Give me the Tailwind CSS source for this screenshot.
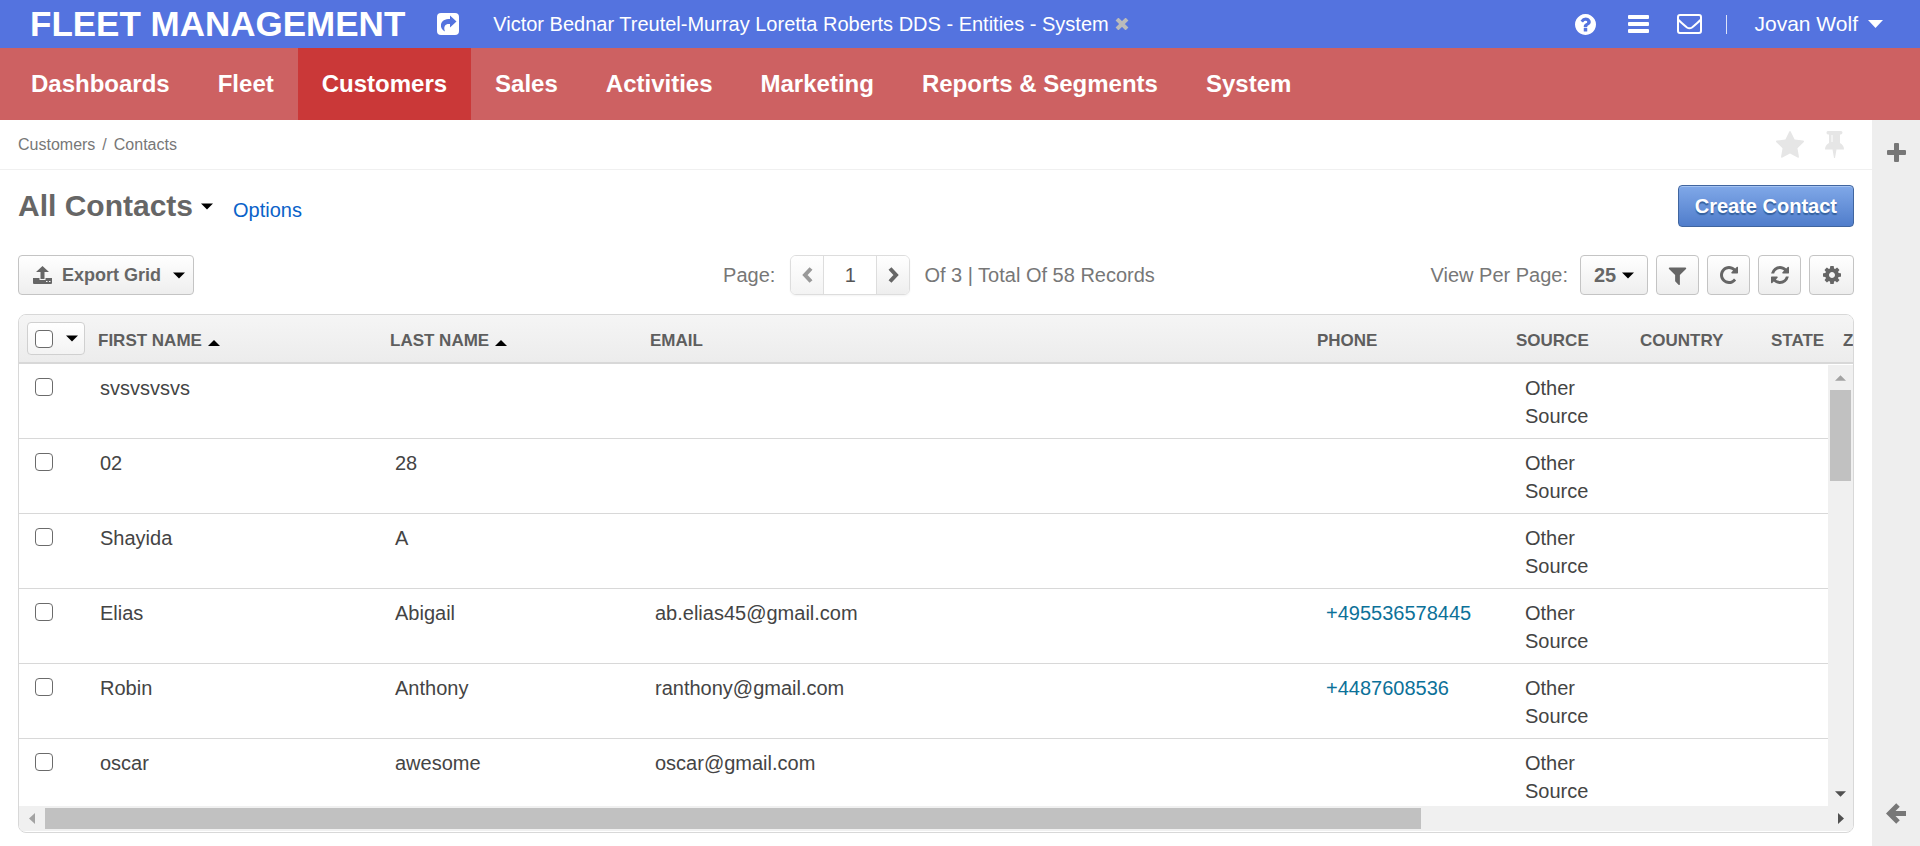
<!DOCTYPE html>
<html lang="en">
<head>
<meta charset="utf-8">
<meta name="viewport" content="width=device-width, initial-scale=1">
<title>All Contacts - Customers</title>
<script src="https://cdn.jsdelivr.net/npm/@tailwindcss/browser@4"></script>
</head>
<body class="flex h-screen flex-col overflow-hidden bg-white font-['Liberation_Sans',Arial,sans-serif] text-[20px] text-[#444]">

<svg class="hidden" aria-hidden="true">
  <symbol id="caret" viewBox="0 0 12 6"><path d="M0 0h12L6 6z"/></symbol>
  <symbol id="question" viewBox="128 128 1536 1536"><path d="M1024 1376v-192q0-14-9-23t-23-9h-192q-14 0-23 9t-9 23v192q0 14 9 23t23 9h192q14 0 23-9t9-23zm256-672q0-88-55.5-163t-138.5-116-170-41q-243 0-371 213-15 24 8 42l132 100q7 6 19 6 16 0 25-12 53-68 86-92 34-24 86-24 48 0 85.5 26t37.5 59q0 38-20 61t-68 45q-63 28-115.5 86.500t-52.5 125.500v36q0 14 9 23t23 9h192q14 0 23-9t9-23q0-19 21.500-49.500t54.500-49.500q32-18 49-28.500t46-35 44.500-48 28-60.500 12.500-81zm384 192q0 209-103 385.500t-279.500 279.500-385.500 103-385.500-103-279.500-279.500-103-385.500 103-385.500 279.500-279.500 385.500-103 385.500 103 279.500 279.500 103 385.500z"/></symbol>
  <symbol id="star" viewBox="64 32 1664 1600"><path d="M1728 647q0 22-26 48l-363 354 86 500q1 7 1 20 0 21-10.500 35.500t-30.500 14.500q-19 0-40-12l-449-236-449 236q-22 12-40 12-21 0-31.500-14.500t-10.500-35.500q0-6 2-20l86-500-364-354q-25-27-25-48 0-37 56-46l502-73 225-455q19-41 49-41t49 41l225 455 502 73q56 9 56 46z"/></symbol>
  <symbol id="filter" viewBox="128 128 1536 1536"><path d="M1595 295q17 41-14 70l-493 493v742q0 42-39 59-13 5-25 5-27 0-45-19l-256-256q-19-19-19-45v-486l-493-493q-31-29-14-70 17-39 59-39h1280q42 0 59 39z"/></symbol>
  <symbol id="repeat" viewBox="128 128 1536 1536"><path d="M1664 256v448q0 26-19 45t-45 19h-448q-42 0-59-40-17-39 14-69l138-138q-148-137-349-137-104 0-198.500 40.500t-163.500 109.500-109.500 163.500-40.500 198.500 40.500 198.500 109.500 163.500 163.500 109.500 198.500 40.500q119 0 225-52t179-147q7-10 23-12 15 0 25 9l137 138q9 8 9.500 20.500t-7.500 22.500q-109 132-264 204.500t-327 72.500q-156 0-298-61t-245-164-164-245-61-298 61-298 164-245 245-164 298-61q147 0 284.500 55.500t244.500 156.500l130-129q29-31 70-14 39 17 39 59z"/></symbol>
  <symbol id="refresh" viewBox="128 128 1536 1536"><path d="M1639 1056q0 5-1 7-64 268-268 434.500t-478 166.500q-146 0-282.500-55t-243.500-157l-129 129q-19 19-45 19t-45-19-19-45v-448q0-26 19-45t45-19h448q26 0 45 19t19 45-19 45l-137 137q71 66 161 102t187 36q134 0 250-65t186-179q11-17 53-117 8-23 30-23h192q13 0 22.500 9.500t9.500 22.500zm25-800v448q0 26-19 45t-45 19h-448q-26 0-45-19t-19-45 19-45l138-138q-148-137-349-137-134 0-250 65t-186 179q-11 17-53 117-8 23-30 23h-199q-13 0-22.500-9.500t-9.500-22.500v-7q65-268 270-434.500t480-166.500q146 0 284 55.500t245 156.500l130-129q19-19 45-19t45 19 19 45z"/></symbol>
  <symbol id="cog" viewBox="128 128 1536 1536"><path d="M1152 896q0-106-75-181t-181-75-181 75-75 181 75 181 181 75 181-75 75-181zm512-109v222q0 12-8 23t-20 13l-185 28q-19 54-39 91 35 50 107 138 10 12 10 25t-9 23q-27 37-99 108t-94 71q-12 0-26-9l-138-108q-44 23-91 38-16 136-29 186-7 28-36 28h-222q-14 0-24.500-8.500t-11.500-21.500l-28-184q-49-16-90-37l-141 107q-10 9-25 9-14 0-25-11-126-114-165-168-7-10-7-23 0-12 8-23 15-21 51-66.500t54-70.500q-27-50-41-99l-183-27q-13-2-21-12.500t-8-23.500v-222q0-12 8-23t19-13l186-28q14-46 39-92-40-57-107-138-10-12-10-24 0-10 9-23 26-36 98.500-107.500t94.500-71.500q13 0 26 10l138 107q44-23 91-38 16-136 29-186 7-28 36-28h222q14 0 24.500 8.500t11.500 21.500l28 184q49 16 90 37l142-107q9-9 24-9 13 0 25 10 129 119 165 170 7 8 7 22 0 12-8 23-15 21-51 66.500t-54 70.500q26 50 41 98l183 28q13 2 21 12.500t8 23.500z"/></symbol>
</svg>

<header class="flex h-12 shrink-0 items-center bg-[#5473df] pr-[37px] pl-[30px] text-white">
  <a href="#" class="text-[35px] leading-[48px] font-bold whitespace-nowrap">FLEET MANAGEMENT</a>
  <a href="#" aria-label="Share" class="ml-8">
    <svg class="h-[22px] w-[22px]" viewBox="0 0 22 22"><rect width="22" height="22" rx="4" fill="currentColor"/><path d="M13 2.500l6.500 6-6.500 6v-3.500C8.500 10.500 6 13 8 18.500 5 17 3.500 14.500 4 11.500 4.800 7.500 8 6 13 6z" fill="#5473df"/></svg>
  </a>
  <a href="#" class="ml-[34px] whitespace-nowrap">Victor Bednar Treutel-Murray Loretta Roberts DDS - Entities - System</a>
  <button aria-label="Close" class="ml-1.5"><svg class="h-3 w-[14px]" viewBox="0 0 14 12"><path d="M2 1l10 10M12 1L2 11" stroke="#bbb" stroke-width="4"/></svg></button>
  <div class="ml-auto flex items-center">
    <a href="#" aria-label="Help"><svg class="h-[21px] w-[21px]" fill="currentColor"><use href="#question"/></svg></a>
    <a href="#" aria-label="Menu" class="ml-8"><svg class="h-[18px] w-[21px]" viewBox="0 0 21 18" fill="currentColor"><rect width="21" height="4" rx="1"/><rect y="7" width="21" height="4" rx="1"/><rect y="14" width="21" height="4" rx="1"/></svg></a>
    <a href="#" aria-label="Mail" class="ml-7"><svg class="h-5 w-[25px]" viewBox="0 0 25 20" fill="none" stroke="currentColor" stroke-width="2"><rect x="1" y="1" width="23" height="18" rx="2"/><path d="M1 5.500c3 3 6 5.500 9 8q2.500 1.500 5 0C18 11 21 8.500 24 5.500"/></svg></a>
    <span class="ml-6 h-[19px] w-px bg-white/80"></span>
    <button class="ml-7 flex items-center gap-2.5 text-[21px] whitespace-nowrap">Jovan Wolf <svg class="h-2 w-[15px]" viewBox="0 0 12 6" preserveAspectRatio="none" fill="currentColor"><path d="M0 0h12L6 6z"/></svg></button>
  </div>
</header>

<nav class="flex h-[72px] shrink-0 bg-[#cd6162] pl-[7px] text-[24px] leading-[72px] font-bold whitespace-nowrap text-white">
  <a href="#" class="px-6">Dashboards</a>
  <a href="#" class="px-6">Fleet</a>
  <a href="#" class="bg-[#ca3838] px-6">Customers</a>
  <a href="#" class="px-6">Sales</a>
  <a href="#" class="px-6">Activities</a>
  <a href="#" class="px-6">Marketing</a>
  <a href="#" class="px-6">Reports &amp; Segments</a>
  <a href="#" class="px-6">System</a>
</nav>

<div class="flex min-h-0 flex-1">
  <main class="flex min-w-0 flex-1 flex-col">
    <div class="flex h-[50px] shrink-0 items-center border-b border-[#f0f0f0] pr-7 pl-[18px] text-[16px] text-[#777]">
      <a href="#">Customers</a><span class="mx-[7px]">/</span><a href="#">Contacts</a>
      <button aria-label="Favorite" class="ml-auto"><svg class="h-[27px] w-[28px]" fill="#e6e6e6"><use href="#star"/></svg></button>
      <button aria-label="Pin" class="ml-[21px]"><svg class="h-[27px] w-[19px]" viewBox="0 0 19 27" fill="#e6e6e6"><path d="M3 0h13q1.500 0 1.500 1.500T16 3.500h-1V12q4 2 4 6.500h-7.500L10 27H9L7.500 18.500H0Q0 14 4 12V3.500H3Q1.500 3.500 1.500 1.700T3 0z"/><path d="M7 4v7" stroke="#fff"/></svg></button>
    </div>

    <div class="flex shrink-0 items-center px-[18px] pt-[15px]">
      <h1><button class="flex items-center gap-2 text-[30px] leading-[42px] font-bold text-[#666]">All Contacts <svg class="h-[7px] w-3 fill-black"><use href="#caret"/></svg></button></h1>
      <a href="#" class="mt-2 ml-5 text-[#0a62c9]">Options</a>
      <button class="ml-auto h-[42px] rounded border border-[#40659f] bg-linear-to-b from-[#80a8e8] to-[#507dcb] px-4 font-bold text-white shadow-[inset_0_1px_0_#a5c3f2] text-shadow-[0_2px_1px_#34609e]">Create Contact</button>
    </div>

    <div class="mx-[18px] mt-7 grid h-10 shrink-0 grid-cols-[1fr_auto_1fr] items-center text-[#777]">
      <button class="flex h-10 items-center justify-self-start rounded border border-[#c4c4c4] bg-linear-to-b from-white to-[#eee] pr-2 pl-3.5 text-[18px] font-bold text-[#666]">
        <svg class="h-[18px] w-[19px]" viewBox="0 0 19 18" fill="currentColor"><path d="M9.500 0L16 6h-4.500v7h-4V6H3zM0 12h6.500v2h6v-2H19v5q0 1-1 1H1q-1 0-1-1zm13 3v1h1.500v-1zm3 0v1h1.500v-1z" fill-rule="evenodd"/></svg>
        <span class="mr-3 ml-2.5">Export Grid</span>
        <svg class="h-[7px] w-3 fill-black"><use href="#caret"/></svg>
      </button>
      <div class="flex items-center pl-1.5">
        <label for="page">Page:</label>
        <div class="mr-3.5 ml-[15px] flex h-10 overflow-hidden rounded-md border border-[#ddd] shadow-xs">
          <button aria-label="Previous page" class="flex w-8 items-center justify-center bg-linear-to-b from-white to-[#f3f3f3]"><svg class="h-4 w-[11px]" viewBox="0 0 11 16"><path d="M9 1.500L3 8l6 6.500" fill="none" stroke="#999" stroke-width="4"/></svg></button>
          <input id="page" value="1" class="w-[54px] border-x border-[#ddd] text-center text-[#555]">
          <button aria-label="Next page" class="flex w-8 items-center justify-center bg-linear-to-b from-white to-[#eee]"><svg class="h-4 w-[11px]" viewBox="0 0 11 16"><path d="M2 1.500L8 8l-6 6.500" fill="none" stroke="#666" stroke-width="4"/></svg></button>
        </div>
        <span>Of 3 | Total Of 58 Records</span>
      </div>
      <div class="flex items-center gap-2 justify-self-end text-[#666]">
        <span class="mr-1 text-[#777]">View Per Page:</span>
        <button class="flex h-10 w-[68px] items-center justify-center gap-1.5 rounded border border-[#c4c4c4] bg-linear-to-b from-white to-[#eee] font-bold">25 <svg class="h-[7px] w-3 fill-black"><use href="#caret"/></svg></button>
        <button aria-label="Filters" class="flex h-10 w-[43px] items-center justify-center rounded border border-[#c4c4c4] bg-linear-to-b from-white to-[#eee]"><svg class="h-[19px] w-[19px]" fill="currentColor"><use href="#filter"/></svg></button>
        <button aria-label="Refresh" class="flex h-10 w-[43px] items-center justify-center rounded border border-[#c4c4c4] bg-linear-to-b from-white to-[#eee]"><svg class="h-[18px] w-[18px]" fill="currentColor"><use href="#repeat"/></svg></button>
        <button aria-label="Reset" class="flex h-10 w-[43px] items-center justify-center rounded border border-[#c4c4c4] bg-linear-to-b from-white to-[#eee]"><svg class="h-[18px] w-[18px]" fill="currentColor"><use href="#refresh"/></svg></button>
        <button aria-label="Grid settings" class="flex h-10 w-[45px] items-center justify-center rounded border border-[#c4c4c4] bg-linear-to-b from-white to-[#eee]"><svg class="h-[18px] w-[18px]" fill="currentColor"><use href="#cog"/></svg></button>
      </div>
    </div>

    <section class="mx-[18px] mt-[19px] mb-[13px] flex min-h-0 flex-1 flex-col overflow-hidden rounded-lg border border-[#d8d8d8] pb-px">
      <div class="relative min-h-0 flex-1 overflow-hidden">
        <table class="w-[2340px] table-fixed leading-7">
          <colgroup><col class="w-[70px]"><col class="w-[292px]"><col class="w-[260px]"><col class="w-[667px]"><col class="w-[199px]"><col class="w-[125px]"><col class="w-[131px]"><col class="w-[72px]"><col></colgroup>
          <thead class="bg-linear-to-b from-[#f5f5f5] to-[#ececec] text-left text-[17px] text-[#5e5e5e]">
            <tr class="h-12 border-b-2 border-[#d8d8d8]">
              <th class="pl-2"><div class="flex h-[33px] w-[58px] items-center justify-between rounded border border-[#d0d0d0] bg-linear-to-b from-white to-[#f3f3f3] pr-1.5 pl-[7px]"><input type="checkbox" aria-label="Select all" class="size-[18px] appearance-none rounded-sm border border-[#6b6b6b] bg-white"><button aria-label="Selection options" class="flex"><svg class="h-[7px] w-3 fill-black"><use href="#caret"/></svg></button></div></th>
              <th class="pt-1 pl-[9px]"><button class="flex items-center gap-1.5">FIRST NAME <svg class="mt-1 h-[6px] w-3 rotate-180 fill-black"><use href="#caret"/></svg></button></th>
              <th class="pt-1 pl-[9px]"><button class="flex items-center gap-1.5">LAST NAME <svg class="mt-1 h-[6px] w-3 rotate-180 fill-black"><use href="#caret"/></svg></button></th>
              <th class="pt-1 pl-[9px]">EMAIL</th><th class="pt-1 pl-[9px]">PHONE</th><th class="pt-1 pl-[9px]">SOURCE</th><th class="pt-1 pl-2">COUNTRY</th><th class="pt-1 pl-2">STATE</th><th class="pt-1 pl-2">ZIP CODE</th>
            </tr>
          </thead>
          <tbody class="align-top">
            <tr class="border-b border-[#d8d8d8]"><td class="pt-2.5 pb-2 pl-4"><input type="checkbox" aria-label="Select svsvsvsvs" class="mt-1 block size-[18px] appearance-none rounded-sm border border-[#6b6b6b]"></td><td class="pt-2.5 pb-2 pl-[11px]">svsvsvsvs</td><td></td><td></td><td></td><td class="pt-2.5 pr-5 pb-2 pl-[18px]">Other Source</td><td></td><td></td><td></td></tr>
            <tr class="border-b border-[#d8d8d8]"><td class="pt-2.5 pb-2 pl-4"><input type="checkbox" aria-label="Select 02 28" class="mt-1 block size-[18px] appearance-none rounded-sm border border-[#6b6b6b]"></td><td class="pt-2.5 pb-2 pl-[11px]">02</td><td class="pt-2.5 pb-2 pl-3.5">28</td><td></td><td></td><td class="pt-2.5 pr-5 pb-2 pl-[18px]">Other Source</td><td></td><td></td><td></td></tr>
            <tr class="border-b border-[#d8d8d8]"><td class="pt-2.5 pb-2 pl-4"><input type="checkbox" aria-label="Select Shayida A" class="mt-1 block size-[18px] appearance-none rounded-sm border border-[#6b6b6b]"></td><td class="pt-2.5 pb-2 pl-[11px]">Shayida</td><td class="pt-2.5 pb-2 pl-3.5">A</td><td></td><td></td><td class="pt-2.5 pr-5 pb-2 pl-[18px]">Other Source</td><td></td><td></td><td></td></tr>
            <tr class="border-b border-[#d8d8d8]"><td class="pt-2.5 pb-2 pl-4"><input type="checkbox" aria-label="Select Elias Abigail" class="mt-1 block size-[18px] appearance-none rounded-sm border border-[#6b6b6b]"></td><td class="pt-2.5 pb-2 pl-[11px]">Elias</td><td class="pt-2.5 pb-2 pl-3.5">Abigail</td><td class="pt-2.5 pb-2 pl-3.5">ab.elias45@gmail.com</td><td class="pt-2.5 pb-2 pl-[18px]"><a href="tel:+495536578445" class="text-[#0c7199]">+495536578445</a></td><td class="pt-2.5 pr-5 pb-2 pl-[18px]">Other Source</td><td></td><td></td><td></td></tr>
            <tr class="border-b border-[#d8d8d8]"><td class="pt-2.5 pb-2 pl-4"><input type="checkbox" aria-label="Select Robin Anthony" class="mt-1 block size-[18px] appearance-none rounded-sm border border-[#6b6b6b]"></td><td class="pt-2.5 pb-2 pl-[11px]">Robin</td><td class="pt-2.5 pb-2 pl-3.5">Anthony</td><td class="pt-2.5 pb-2 pl-3.5">ranthony@gmail.com</td><td class="pt-2.5 pb-2 pl-[18px]"><a href="tel:+4487608536" class="text-[#0c7199]">+4487608536</a></td><td class="pt-2.5 pr-5 pb-2 pl-[18px]">Other Source</td><td></td><td></td><td></td></tr>
            <tr class="border-b border-[#d8d8d8]"><td class="pt-2.5 pb-2 pl-4"><input type="checkbox" aria-label="Select oscar awesome" class="mt-1 block size-[18px] appearance-none rounded-sm border border-[#6b6b6b]"></td><td class="pt-2.5 pb-2 pl-[11px]">oscar</td><td class="pt-2.5 pb-2 pl-3.5">awesome</td><td class="pt-2.5 pb-2 pl-3.5">oscar@gmail.com</td><td></td><td class="pt-2.5 pr-5 pb-2 pl-[18px]">Other Source</td><td></td><td></td><td></td></tr>
          </tbody>
        </table>
        <div class="absolute top-[50px] right-0 bottom-0 flex w-[25px] flex-col items-center bg-[#f0f0f0]">
          <button aria-label="Scroll up" class="flex h-[25px] w-full items-center justify-center"><svg class="h-[6px] w-[11px] rotate-180 fill-[#a3a3a3]"><use href="#caret"/></svg></button>
          <div class="h-[91px] w-[21px] bg-[#c1c1c1]"></div>
          <button aria-label="Scroll down" class="mt-auto flex h-[25px] w-full items-center justify-center"><svg class="h-[6px] w-[11px] fill-[#505050]"><use href="#caret"/></svg></button>
        </div>
      </div>
      <div class="flex h-[25px] shrink-0 items-center bg-[#f0f0f0]">
        <button aria-label="Scroll left" class="flex h-full w-[26px] items-center justify-center"><svg class="h-[11px] w-[6px] fill-[#a3a3a3]" viewBox="0 0 6 11"><path d="M6 0v11L0 5.500z"/></svg></button>
        <div class="h-[21px] w-[75%] bg-[#c1c1c1]"></div>
        <button aria-label="Scroll right" class="ml-auto flex h-full w-[25px] items-center justify-center"><svg class="h-[11px] w-[6px] fill-[#505050]" viewBox="0 0 6 11"><path d="M0 0v11l6-5.500z"/></svg></button>
      </div>
    </section>
  </main>

  <aside class="flex w-12 shrink-0 flex-col items-center justify-between bg-[#eee] pt-[23px] pb-[22px]">
    <button aria-label="Add widget"><svg class="h-[19px] w-[19px]" viewBox="0 0 19 19" fill="#777"><path d="M7 1q0-1 1-1h3q1 0 1 1v6h6q1 0 1 1v3q0 1-1 1h-6v6q0 1-1 1H8q-1 0-1-1v-6H1q-1 0-1-1V8q0-1 1-1h6z"/></svg></button>
    <button aria-label="Collapse"><svg class="h-[21px] w-5" viewBox="0 0 20 21" fill="none" stroke="#777" stroke-width="5"><path d="M12 2l-8.500 8.500L12 19M4 10.500h16"/></svg></button>
  </aside>
</div>
</body>
</html>
